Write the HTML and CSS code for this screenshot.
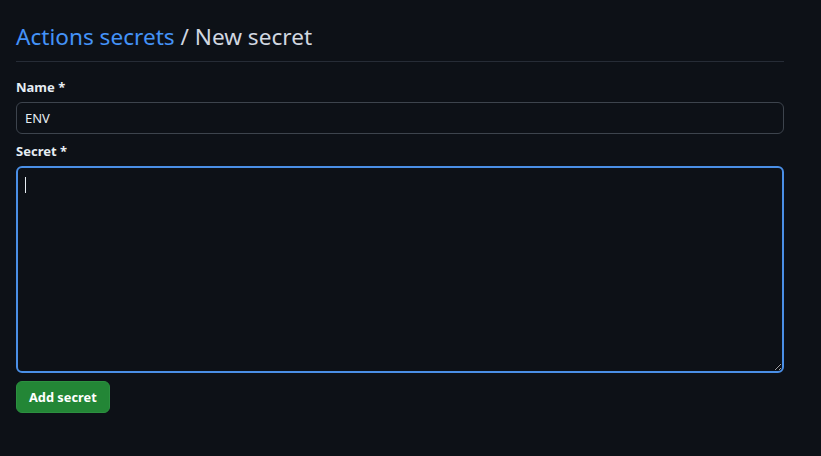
FILE: index.html
```html
<!DOCTYPE html>
<html lang="en">
<head>
<meta charset="utf-8">
<title>New secret</title>
<link rel="stylesheet" href="styles.css">
</head>
<body>
<main class="page">
  <h2 class="title"><a class="crumb" href="#">Actions secrets</a> / New secret</h2>
  <form class="form">
    <label class="label" for="name">Name *</label>
    <input class="input" id="name" type="text" value="ENV">
    <label class="label label-secret" for="secret">Secret *</label>
    <div class="area-wrap">
      <textarea class="area" id="secret"></textarea>
      <span class="caret"></span>
    </div>
    <button class="btn" type="button">Add secret</button>
  </form>
</main>
</body>
</html>
```
FILE: styles.css
```css
* { box-sizing: border-box; }
html, body { background: #0d1117; }
body {
  margin: 0;
  font-family: "Noto Sans", "Open Sans", sans-serif;
  color: #e6edf3;
}
.page {
  padding: 20px 37px 0 16px;
}
.title {
  margin: 0;
  font-size: 22.6px;
  font-weight: 400;
  line-height: 33px;
  color: #d1d7e0;
  padding-bottom: 8px;
  border-bottom: 1px solid #262c36;
}
.crumb { color: #4493f8; text-decoration: none; }
.form { display: flex; flex-direction: column; padding-top: 15px; }
.label {
  font-size: 13px;
  font-weight: 700;
  line-height: 20px;
  margin-bottom: 5px;
  color: #e6edf3;
}
.label-secret { margin-top: 7px; }
.input {
  height: 32px;
  width: 100%;
  background: #0d1117;
  border: 1px solid #3d444d;
  border-radius: 6px;
  color: #e6edf3;
  font-family: inherit;
  font-size: 13px;
  padding: 0 8px;
  outline: none;
}
.area-wrap { position: relative; }
.area {
  display: block;
  width: 100%;
  height: 207px;
  background: #0d1117;
  border: 2px solid #4a8fe6;
  border-radius: 6px;
  color: #e6edf3;
  outline: none;
  resize: vertical;
}
.caret {
  position: absolute;
  left: 9px;
  top: 11px;
  width: 1px;
  height: 16px;
  background: #e6edf3;
}
.btn {
  align-self: flex-start;
  margin-top: 8px;
  height: 32px;
  padding: 0 12px;
  background: #238636;
  color: #ffffff;
  border: 1px solid #2c9040;
  border-radius: 6px;
  font-family: inherit;
  font-size: 12.8px;
  font-weight: 700;
}
```
